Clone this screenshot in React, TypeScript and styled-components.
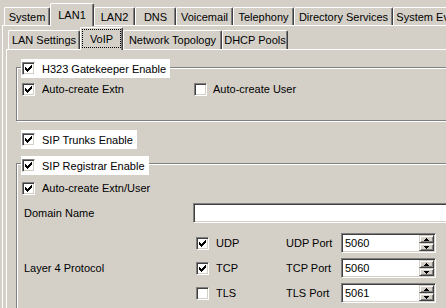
import styled, { createGlobalStyle } from "styled-components";

const GlobalStyle = createGlobalStyle`
  html, body {
    margin: 0;
    padding: 0;
    background: #d4d0c8;
  }
  body {
    font-family: "Liberation Sans", Arial, sans-serif;
    font-size: 11px;
    color: #000;
    overflow: hidden;
  }
`;

const Window = styled.div`
  width: 446px;
  height: 308px;
  overflow: hidden;
  background: #d4d0c8;
`;

const TabStrip = styled.div<{ $height: number; $indent: number }>`
  display: flex;
  align-items: flex-end;
  height: ${(p) => p.$height}px;
  padding-left: ${(p) => p.$indent}px;
`;

const Tab = styled.div<{ $width: number; $h: number; $active?: boolean }>`
  flex: none;
  box-sizing: border-box;
  display: flex;
  align-items: center;
  justify-content: center;
  width: ${(p) => p.$width}px;
  height: ${(p) => (p.$active ? 23 : p.$h)}px;
  margin-bottom: ${(p) => (p.$active ? -1 : 0)}px;
  position: relative;
  z-index: ${(p) => (p.$active ? 1 : 0)};
  background: #d4d0c8;
  border-top: 1px solid #fff;
  border-left: 1px solid #fff;
  border-right: 1px solid #404040;
  border-radius: 2px 2px 0 0;
  box-shadow: inset -1px 0 0 #808080;
  white-space: nowrap;
  overflow: hidden;
`;

const FocusRing = styled.span`
  flex: 1;
  align-self: stretch;
  margin: 1px 1px 2px 1px;
  border: 1px dotted #000;
  display: flex;
  align-items: center;
  justify-content: center;
`;

const Panel = styled.div<{ $indent: number }>`
  margin-left: ${(p) => p.$indent}px;
  border-top: 1px solid #fff;
  border-left: 1px solid #fff;
`;

const Content = styled.div`
  padding-left: 9px;
  height: 300px;
`;

const Group = styled.div<{ $top: number; $bottom: number }>`
  display: flex;
  flex-direction: column;
  width: 560px;
  margin-top: ${(p) => p.$top}px;
  padding-bottom: ${(p) => p.$bottom}px;
  border: 1px solid #808080;
  box-shadow: inset 1px 1px 0 #fff, 1px 1px 0 #fff;
`;

const Legend = styled.div<{ $mt: number; $ml: number }>`
  display: flex;
  align-items: center;
  gap: 7px;
  width: fit-content;
  height: 19px;
  margin-top: ${(p) => p.$mt}px;
  margin-left: ${(p) => p.$ml}px;
  padding: 0 4px 0 1px;
  background: #fff;
  white-space: nowrap;
`;

const Row = styled.div<{ $cols: string; $mt: number; $pl: number; $h?: number }>`
  display: grid;
  grid-template-columns: ${(p) => p.$cols};
  align-items: center;
  height: ${(p) => p.$h ?? 16}px;
  margin-top: ${(p) => p.$mt}px;
  padding-left: ${(p) => p.$pl}px;
  white-space: nowrap;
`;

const ProtocolGrid = styled.div`
  display: grid;
  grid-template-columns: 172px 90px 55px 95px;
  grid-template-rows: repeat(3, 20px);
  row-gap: 5px;
  align-items: center;
  margin-top: 10px;
  padding-left: 7px;
  white-space: nowrap;
`;

const SpanLabel = styled.span`
  grid-row: 1 / span 3;
`;

const CheckItem = styled.label<{ $gap?: number }>`
  display: flex;
  align-items: center;
  gap: ${(p) => p.$gap ?? 7}px;
`;

const Box = styled.span`
  box-sizing: border-box;
  flex: none;
  width: 13px;
  height: 13px;
  background: #fff;
  border: 1px solid;
  border-color: #808080 #fff #fff #808080;
  box-shadow: inset 1px 1px 0 #404040, inset -1px -1px 0 #d4d0c8;
  display: flex;
  align-items: center;
  justify-content: center;
`;

const Sunken = styled.div`
  box-sizing: border-box;
  height: 20px;
  background: #fff;
  border: 1px solid;
  border-color: #808080 #fff #fff #808080;
  box-shadow: inset 1px 1px 0 #404040, inset -1px -1px 0 #d4d0c8;
`;

const SpinField = styled(Sunken)`
  display: flex;
  align-items: center;
  padding: 1px;
`;

const SpinValue = styled.span`
  flex: 1;
  padding-left: 2px;
`;

const SpinButtons = styled.div`
  display: flex;
  flex-direction: column;
`;

const SpinButton = styled.div`
  box-sizing: border-box;
  width: 15px;
  height: 8px;
  background: #d4d0c8;
  border: 1px solid;
  border-color: #d4d0c8 #404040 #404040 #d4d0c8;
  box-shadow: inset 1px 1px 0 #fff, inset -1px -1px 0 #808080;
  display: flex;
  align-items: center;
  justify-content: center;
`;

const CHECK_POINTS =
  "0,2 1,2 1,3 2,3 2,4 3,4 3,3 4,3 4,2 5,2 5,1 6,1 6,0 7,0 7,3 6,3 6,4 5,4 5,5 4,5 4,6 3,6 3,7 2,7 2,6 1,6 1,5 0,5";

function Check({ on, label, gap }: { on: boolean; label: string; gap?: number }) {
  return (
    <CheckItem $gap={gap}>
      <Box>
        {on && (
          <svg width="7" height="7" viewBox="0 0 7 7" shapeRendering="crispEdges">
            <polygon points={CHECK_POINTS} fill="#000" />
          </svg>
        )}
      </Box>
      <span>{label}</span>
    </CheckItem>
  );
}

function Arrow({ down }: { down?: boolean }) {
  return (
    <svg width="5" height="3" viewBox="0 0 5 3" shapeRendering="crispEdges">
      <g fill="#000">
        <rect x="2" y={down ? 2 : 0} width="1" height="1" />
        <rect x="1" y="1" width="3" height="1" />
        <rect x="0" y={down ? 0 : 2} width="5" height="1" />
      </g>
    </svg>
  );
}

function Spin({ value }: { value: string }) {
  return (
    <SpinField>
      <SpinValue>{value}</SpinValue>
      <SpinButtons>
        <SpinButton>
          <Arrow />
        </SpinButton>
        <SpinButton>
          <Arrow down />
        </SpinButton>
      </SpinButtons>
    </SpinField>
  );
}

const topTabs = [
  { name: "System", w: 46 },
  { name: "LAN1", w: 44, active: true },
  { name: "LAN2", w: 41 },
  { name: "DNS", w: 41 },
  { name: "Voicemail", w: 57 },
  { name: "Telephony", w: 61 },
  { name: "Directory Services", w: 99 },
  { name: "System Events", w: 80 },
];

const subTabs = [
  { name: "LAN Settings", w: 72 },
  { name: "VoIP", w: 43, active: true },
  { name: "Network Topology", w: 99 },
  { name: "DHCP Pools", w: 66 },
];

const protocols = [
  { name: "UDP", on: true, port: "5060" },
  { name: "TCP", on: true, port: "5060" },
  { name: "TLS", on: false, port: "5061" },
];

export default function App() {
  return (
    <Window>
      <GlobalStyle />
      <TabStrip $height={25} $indent={4}>
        {topTabs.map((t) => (
          <Tab key={t.name} $width={t.w} $h={18} $active={t.active}>
            {t.name}
          </Tab>
        ))}
      </TabStrip>
      <Panel $indent={2}>
        <TabStrip $height={23} $indent={5}>
          {subTabs.map((t) => (
            <Tab key={t.name} $width={t.w} $h={19} $active={t.active}>
              {t.active ? <FocusRing>{t.name}</FocusRing> : t.name}
            </Tab>
          ))}
        </TabStrip>
        <Panel $indent={3}>
          <Content>
            <Group $top={17} $bottom={23}>
              <Legend $mt={-9} $ml={4}>
                <Check on label="H323 Gatekeeper Enable" />
              </Legend>
              <Row $cols="172px auto" $mt={3} $pl={5}>
                <Check on label="Auto-create Extn" />
                <Check on={false} label="Auto-create User" gap={6} />
              </Row>
            </Group>

            <Legend $mt={9} $ml={5}>
              <Check on label="SIP Trunks Enable" />
            </Legend>

            <Group $top={14} $bottom={40}>
              <Legend $mt={-8} $ml={4}>
                <Check on label="SIP Registrar Enable" />
              </Legend>
              <Row $cols="auto" $mt={5} $pl={5}>
                <Check on label="Auto-create Extn/User" />
              </Row>
              <Row $cols="169px 1fr" $mt={7} $pl={7} $h={20}>
                <span>Domain Name</span>
                <Sunken />
              </Row>
              <ProtocolGrid>
                <SpanLabel>Layer 4 Protocol</SpanLabel>
                {protocols.map((p) => [
                  <Check key={p.name} on={p.on} label={p.name} />,
                  <span key={p.name + "l"}>{p.name} Port</span>,
                  <Spin key={p.name + "s"} value={p.port} />,
                ])}
              </ProtocolGrid>
            </Group>
          </Content>
        </Panel>
      </Panel>
    </Window>
  );
}
